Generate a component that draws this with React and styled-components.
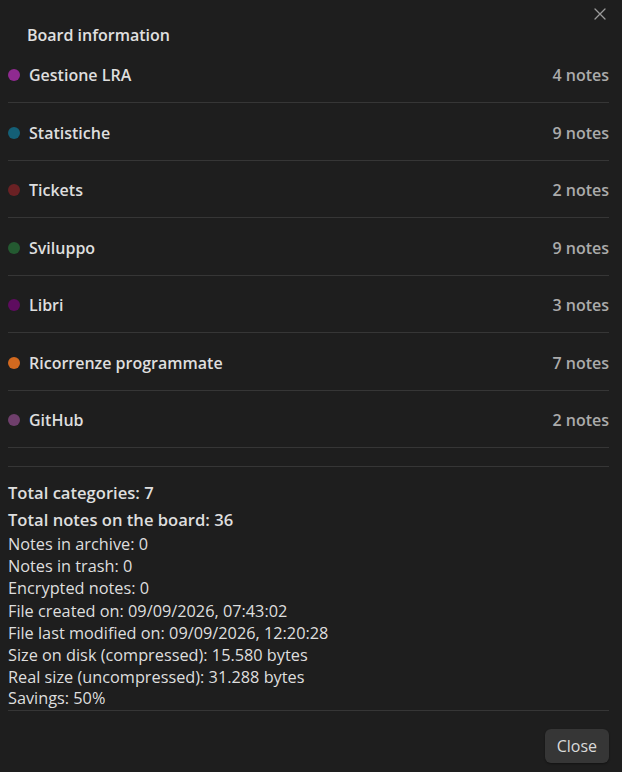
import React from "react";
import styled, { createGlobalStyle } from "styled-components";

const Global = createGlobalStyle`
  html, body { margin: 0; padding: 0; background: #1e1e1e; }
  body { font-family: "Open Sans", "Noto Sans", sans-serif; color: #dadada; }
  * { box-sizing: border-box; }
`;

const Modal = styled.div`
  position: relative;
  width: 622px;
  min-height: 772px;
  padding: 0 13px 9px 8px;
  display: flex;
  flex-direction: column;
`;

const CloseX = styled.button`
  position: absolute;
  top: 4px;
  right: 12px;
  width: 20px;
  height: 20px;
  padding: 0;
  border: none;
  background: transparent;
  color: #9a9a9a;
  display: flex;
  align-items: center;
  justify-content: center;
  cursor: pointer;
`;

const Title = styled.h2`
  margin: 0;
  padding: 25px 0 0 19px;
  height: 45.5px;
  font-size: 16px;
  line-height: 21px;
  font-weight: 600;
  color: #e0e0e0;
`;

const List = styled.div`
  display: flex;
  flex-direction: column;
`;

const Row = styled.div`
  height: 57.5px;
  display: flex;
  align-items: center;
  padding-top: 2.5px;
  border-bottom: 1px solid #363636;
`;

const Dot = styled.span`
  width: 12px;
  height: 12px;
  border-radius: 50%;
  background: ${(p) => p.$color};
  flex: none;
  margin-right: 9px;
`;

const Name = styled.span`
  flex: 1;
  font-size: 16px;
  font-weight: 600;
  color: #dedede;
`;

const Count = styled.span`
  font-size: 16px;
  font-weight: 600;
  color: #ababab;
`;

const Stats = styled.div`
  margin-top: 17.5px;
  border-top: 1px solid #363636;
  border-bottom: 1px solid #363636;
  padding-top: 15.5px;
  padding-bottom: 0;
  display: flex;
  flex-direction: column;
`;

const Line = styled.div`
  font-size: ${(p) => (p.$bold ? 16.6 : 16.3)}px;
  line-height: 22.2px;
  font-weight: ${(p) => (p.$bold ? 600 : 400)};
  color: #dedede;
  margin-bottom: ${(p) => p.$gap || 0}px;
  &:last-child { line-height: 21.5px; }
`;

const Footer = styled.div`
  display: flex;
  justify-content: flex-end;
  padding-top: 18px;
`;

const Button = styled.button`
  height: 34px;
  padding: 0 12px;
  border: none;
  border-radius: 6px;
  background: #363636;
  color: #dadada;
  font-family: inherit;
  font-size: 16px;
  box-shadow: 0 1px 2px rgba(0,0,0,0.4);
  cursor: pointer;
`;

const categories = [
  { name: "Gestione LRA", color: "#8f2a90", count: 4 },
  { name: "Statistiche", color: "#145f76", count: 9 },
  { name: "Tickets", color: "#6a2124", count: 2 },
  { name: "Sviluppo", color: "#245a31", count: 9 },
  { name: "Libri", color: "#5e0c5f", count: 3 },
  { name: "Ricorrenze programmate", color: "#d2691f", count: 7 },
  { name: "GitHub", color: "#6f3f6c", count: 2 },
];

const stats = [
  "Notes in archive: 0",
  "Notes in trash: 0",
  "Encrypted notes: 0",
  "File created on: 09/09/2026, 07:43:02",
  "File last modified on: 09/09/2026, 12:20:28",
  "Size on disk (compressed): 15.580 bytes",
  "Real size (uncompressed): 31.288 bytes",
  "Savings: 50%",
];

export default function App() {
  return (
    <>
      <Global />
      <Modal>
        <CloseX aria-label="Close">
          <svg width="12" height="12" viewBox="0 0 12 12" fill="none" stroke="currentColor" strokeWidth="1.3" strokeLinecap="round">
            <path d="M1 1 L11 11 M11 1 L1 11" />
          </svg>
        </CloseX>
        <Title>Board information</Title>
        <List>
          {categories.map((c) => (
            <Row key={c.name}>
              <Dot $color={c.color} />
              <Name>{c.name}</Name>
              <Count>{c.count} notes</Count>
            </Row>
          ))}
        </List>
        <Stats>
          <Line $bold $gap={4.8}>Total categories: 7</Line>
          <Line $bold $gap={1.8}>Total notes on the board: 36</Line>
          {stats.map((s) => (
            <Line key={s}>{s}</Line>
          ))}
        </Stats>
        <Footer>
          <Button>Close</Button>
        </Footer>
      </Modal>
    </>
  );
}
